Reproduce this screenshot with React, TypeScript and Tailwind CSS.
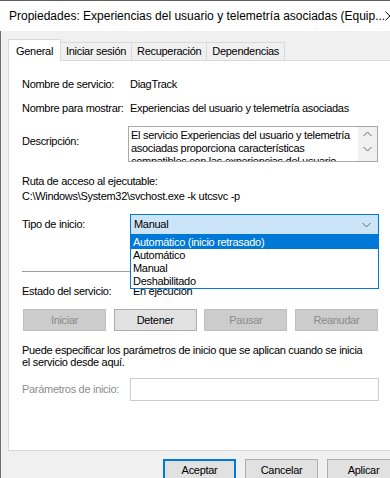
import React from 'react'

function Chevron({ up = false, className = '' }: { up?: boolean; className?: string }) {
  return (
    <svg width="9" height="6" viewBox="0 0 9 6" className={className}>
      <path
        d={up ? 'M0.5 5 L4.5 1 L8.5 5' : 'M0.5 1 L4.5 5 L8.5 1'}
        fill="none"
        stroke="#6a6a6a"
        strokeWidth="1"
      />
    </svg>
  )
}

function Row({ label, value, labelW = 'w-[108px]' }: { label: string; value: string; labelW?: string }) {
  return (
    <div className="flex h-[13px] leading-[13px] whitespace-nowrap">
      <span className={labelW}>{label}</span>
      <span>{value}</span>
    </div>
  )
}

function SvcButton({ label, disabled }: { label: string; disabled?: boolean }) {
  return (
    <div
      className={
        disabled
          ? 'w-[83px] h-[22px] flex items-center justify-center bg-[#cccccc] border border-[#bfbfbf] text-[#8a8a8a]'
          : 'w-[83px] h-[22px] flex items-center justify-center bg-[#e1e1e1] border border-[#adadad]'
      }
    >
      {label}
    </div>
  )
}

const startTypes = ['Automático (inicio retrasado)', 'Automático', 'Manual', 'Deshabilitado']

export default function App() {
  return (
    <div className="w-[390px] h-[478px] overflow-hidden bg-[#f0f0f0] font-['Liberation_Sans',Arial,sans-serif] text-[11px] tracking-[-0.3px] text-black">
      <div className="w-[405px]">
        {/* title bar */}
        <div className="h-[31px] bg-white border-t border-[#5f5f5f] flex items-center">
          <span className="flex-1 pl-[9px] text-[12px] tracking-normal whitespace-nowrap">
            Propiedades: Experiencias del usuario y telemetría asociadas (Equip...
          </span>
          <svg width="10" height="10" viewBox="0 0 10 10" className="mr-[10px]">
            <path d="M0.5 0.5 L9.5 9.5 M9.5 0.5 L0.5 9.5" stroke="#000" strokeWidth="1" />
          </svg>
        </div>

        <div className="border-l border-[#6e6e6e] pl-[7px] h-[447px]">
          {/* tabs */}
          <div className="flex items-end pt-[7px] h-[29px]">
            <div className="relative z-10 -mb-px h-[22px] px-[7px] bg-white border border-b-0 border-[#d9d9d9] flex items-start pt-[3px]">
              General
            </div>
            {['Iniciar sesión', 'Recuperación', 'Dependencias'].map((t) => (
              <div key={t} className="h-[18px] px-[5px] border-t border-r border-[#d9d9d9] flex items-center">
                {t}
              </div>
            ))}
          </div>

          {/* panel */}
          <div className="w-[390px] h-[391px] bg-white border border-[#d9d9d9] pl-[13px]">
            <div className="pt-[17px]">
              <Row label="Nombre de servicio:" value="DiagTrack" />
            </div>
            <div className="mt-[11px]">
              <Row label="Nombre para mostrar:" value="Experiencias del usuario y telemetría asociadas" />
            </div>

            {/* description */}
            <div className="mt-[11px] flex">
              <span className="w-[106px] pt-[9px] leading-[13px]">Descripción:</span>
              <div className="w-[250px] h-[36px] border border-[#a8a8a8] flex overflow-hidden">
                <div className="flex-1 pl-[2px] pt-[2px] leading-[13px] whitespace-nowrap">
                  El servicio Experiencias del usuario y telemetría
                  <br />
                  asociadas proporciona características
                  <br />
                  compatibles con las experiencias del usuario
                </div>
                <div className="w-[19px] bg-[#f0f0f0] flex flex-col items-center pt-[4px] gap-[9px]">
                  <Chevron up />
                  <Chevron />
                </div>
              </div>
            </div>

            <div className="mt-[13px] h-[13px] leading-[13px]">Ruta de acceso al ejecutable:</div>
            <div className="mt-[2px] h-[13px] leading-[13px] whitespace-nowrap">
              C:\Windows\System32\svchost.exe -k utcsvc -p
            </div>

            {/* startup type */}
            <div className="mt-[11px] flex items-center h-[21px]">
              <span className="w-[108px]">Tipo de inicio:</span>
              <div className="relative">
                <div className="w-[249px] h-[21px] bg-[#cce4f7] border border-[#0078d7] flex items-center pl-[3px] pr-[7px] justify-between">
                  <span>Manual</span>
                  <Chevron />
                </div>
                <div className="absolute z-20 left-0 top-[21px] w-[249px] bg-white border border-[#0078d7]">
                  {startTypes.map((s, i) => (
                    <div
                      key={s}
                      className={
                        i === 0
                          ? 'h-[13px] leading-[13px] pl-[2px] bg-[#0078d7] text-white'
                          : 'h-[13px] leading-[13px] pl-[2px]'
                      }
                    >
                      {s}
                    </div>
                  ))}
                </div>
              </div>
            </div>

            <div className="mt-[36px] w-[356px] h-px bg-[#a0a0a0]" />

            <div className="mt-[13px]">
              <Row label="Estado del servicio:" value="En ejecución" labelW="w-[111px]" />
            </div>

            <div className="mt-[11px] ml-px w-[355px] flex justify-between">
              <SvcButton label="Iniciar" disabled />
              <SvcButton label="Detener" />
              <SvcButton label="Pausar" disabled />
              <SvcButton label="Reanudar" disabled />
            </div>

            <p className="mt-[13px] leading-[12px] whitespace-nowrap">
              Puede especificar los parámetros de inicio que se aplican cuando se inicia
              <br />
              el servicio desde aquí.
            </p>

            <div className="mt-[10px] flex items-center">
              <span className="w-[108px] text-[#8d8d8d]">Parámetros de inicio:</span>
              <div className="w-[249px] h-[23px] bg-white border border-[#cccccc]" />
            </div>
          </div>

          {/* dialog buttons */}
          <div className="mt-[8px] pl-[155px] flex gap-[9px]">
            <div className="w-[73px] h-[23px] bg-[#e1e1e1] border-2 border-[#0078d7] flex items-center justify-center">
              Aceptar
            </div>
            <div className="w-[73px] h-[23px] bg-[#e1e1e1] border border-[#adadad] flex items-center justify-center">
              Cancelar
            </div>
            <div className="w-[73px] h-[23px] bg-[#e1e1e1] border border-[#adadad] flex items-center justify-center">
              Aplicar
            </div>
          </div>
        </div>
      </div>
    </div>
  )
}
